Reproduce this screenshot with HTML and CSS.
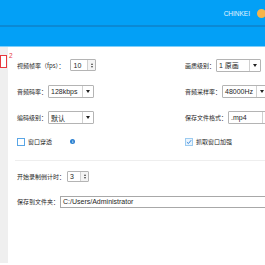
FILE: index.html
```html
<!DOCTYPE html>
<html lang="zh-CN">
<head>
    <meta charset="UTF-8">
    <meta name="viewport" content="width=device-width, initial-scale=1.0">
    <title>录制设置</title>
    <link rel="stylesheet" href="styles.css">
</head>
<body>
    <div class="topbar">
        <span class="user-name">CHINKEI</span>
        <span class="user-badge"></span>
    </div>
    <div class="subbar"></div>

    <div class="main">
        <div class="sidebar">
            <div class="tab-active"></div>
            <span class="tab-count">2</span>
        </div>

        <div class="content">
            <div class="form-grid">
                <div class="field">
                    <span class="label">视频帧率（fps）：</span>
                    <div class="spin spin-fps">
                        <span class="spin-value">10</span>
                        <span class="spin-buttons"><i class="up"></i><i class="down"></i></span>
                    </div>
                </div>
                <div class="field">
                    <span class="label">画质级别：</span>
                    <div class="select select-quality">
                        <span class="select-value">1 原画</span>
                        <span class="select-arrow"></span>
                    </div>
                </div>

                <div class="field">
                    <span class="label">音频码率：</span>
                    <div class="select">
                        <span class="select-value">128kbps</span>
                        <span class="select-arrow"></span>
                    </div>
                </div>
                <div class="field">
                    <span class="label">音频采样率：</span>
                    <div class="select">
                        <span class="select-value">48000Hz</span>
                        <span class="select-arrow"></span>
                    </div>
                </div>

                <div class="field">
                    <span class="label">编码级别：</span>
                    <div class="select">
                        <span class="select-value">默认</span>
                        <span class="select-arrow"></span>
                    </div>
                </div>
                <div class="field">
                    <span class="label">保存文件格式：</span>
                    <div class="select">
                        <span class="select-value">.mp4</span>
                        <span class="select-arrow"></span>
                    </div>
                </div>

                <div class="field">
                    <span class="checkbox"></span>
                    <span class="check-label">窗口穿透</span>
                    <span class="info-icon">i</span>
                </div>
                <div class="field">
                    <span class="checkbox checked">
                        <svg viewBox="0 0 8 8" width="6" height="6"><path d="M1.2 4.2 L3.2 6.1 L6.9 1.6" fill="none" stroke="#2b7fd6" stroke-width="1.2"/></svg>
                    </span>
                    <span class="check-label">抓取窗口加强</span>
                </div>
            </div>

            <div class="divider"></div>

            <div class="field row-countdown">
                <span class="label">开始录制倒计时：</span>
                <div class="spin spin-small">
                    <span class="spin-value">3</span>
                    <span class="spin-buttons"><i class="up"></i><i class="down"></i></span>
                </div>
            </div>

            <div class="field row-folder">
                <span class="label">保存到文件夹：</span>
                <div class="path-input">C:/Users/Administrator</div>
            </div>
        </div>
    </div>
</body>
</html>
```

FILE: styles.css
```css
/* General */
body {
    margin: 0;
    width: 265px;
    height: 265px;
    overflow: hidden;
    font-family: "Noto Sans CJK SC", "Noto Sans", sans-serif;
    font-size: 6px;
    color: #262626;
    background-color: #ffffff;
}

/* Header bars */
.topbar {
    height: 27px;
    padding-top: 2px;
    box-sizing: border-box;
    background-color: #03a0f6;
    border-bottom: 2px solid #0b89d4;
    display: flex;
    align-items: center;
    justify-content: flex-end;
    gap: 7px;
}

.user-name {
    font-family: "Liberation Sans", sans-serif;
    font-size: 6.5px;
    color: #e6f5ff;
}

.user-badge {
    width: 9px;
    height: 9px;
    margin-right: -1px;
    border-radius: 50%;
    background-color: #f5b44a;
}

.subbar {
    height: 19px;
    background-color: #03a0f6;
    border-bottom: 1px solid #7fcffa;
}

/* Main area */
.main {
    display: flex;
    height: 216px;
    position: relative;
}

.sidebar {
    width: 8px;
    background-color: #efefef;
    padding-top: 8px;
    box-sizing: border-box;
}

.tab-active {
    width: 7px;
    height: 13px;
    box-sizing: border-box;
    border: 1px solid #e8383d;
    background-color: #ffffff;
}

.tab-count {
    position: absolute;
    left: 9px;
    top: 5px;
    color: #e8383d;
    font-family: "Liberation Sans", sans-serif;
    font-size: 6.5px;
}

.content {
    flex: 1;
    padding: 5px 0 0 9px;
    overflow: hidden;
}

.form-grid {
    display: grid;
    grid-template-columns: 168px 1fr;
    grid-template-rows: 26px 26px 27px 21px;
}

.field {
    display: flex;
    align-items: center;
    gap: 1px;
    white-space: nowrap;
}

/* Selects */
.select {
    flex: none;
    width: 46px;
    height: 13px;
    box-sizing: border-box;
    border: 1px solid #b4b4b4;
    border-radius: 1px;
    display: flex;
    align-items: stretch;
    background-color: #ffffff;
}

.select-quality {
    width: 45px;
}

.select-value {
    flex: 1;
    display: flex;
    align-items: center;
    padding-left: 2px;
    font-family: "Liberation Sans", "Noto Sans CJK SC", sans-serif;
    font-size: 7px;
}

.select-arrow {
    width: 10px;
    border-left: 1px solid #d0d0d0;
    display: flex;
    align-items: center;
    justify-content: center;
}

.select-arrow::after {
    content: "";
    border-left: 2.5px solid transparent;
    border-right: 2.5px solid transparent;
    border-top: 3px solid #222222;
}

/* Spin boxes */
.spin {
    flex: none;
    width: 26px;
    height: 12px;
    box-sizing: border-box;
    border: 1px solid #b4b4b4;
    border-radius: 1px;
    display: flex;
    margin-left: 1px;
}

.spin-fps {
    margin-left: 5px;
}

.spin-small {
    width: 22px;
    height: 11px;
}

.spin-value {
    flex: 1;
    display: flex;
    align-items: center;
    padding-left: 2px;
    font-family: "Liberation Sans", sans-serif;
    font-size: 7px;
}

.spin-buttons {
    width: 7px;
    border-left: 1px solid #d0d0d0;
    background-color: #f4f4f4;
    display: flex;
    flex-direction: column;
    align-items: center;
    justify-content: center;
    gap: 1px;
}

.spin-buttons .up {
    border-left: 1.5px solid transparent;
    border-right: 1.5px solid transparent;
    border-bottom: 2px solid #444444;
}

.spin-buttons .down {
    border-left: 1.5px solid transparent;
    border-right: 1.5px solid transparent;
    border-top: 2px solid #444444;
}

/* Checkboxes */
.checkbox {
    width: 8px;
    height: 8px;
    box-sizing: border-box;
    border: 1px solid #5aa6e6;
    background-color: #ffffff;
    display: flex;
    align-items: center;
    justify-content: center;
    margin-right: 2px;
}

.checkbox.checked {
    border-color: #9ccbf0;
    background-color: #eaf4fd;
}

.check-label {
    margin-right: 17px;
}

.info-icon {
    width: 5px;
    height: 5px;
    border-radius: 50%;
    background-color: #2a7fd0;
    color: #ffffff;
    font-family: "Liberation Sans", sans-serif;
    font-size: 4px;
    font-weight: bold;
    line-height: 5px;
    text-align: center;
}

/* Lower section */
.divider {
    height: 1px;
    margin: 8px 0 0 -2px;
    background-color: #eeeeee;
}

.row-countdown {
    height: 30px;
}

.row-folder {
    height: 21px;
}

.path-input {
    flex: none;
    width: 220px;
    height: 12px;
    box-sizing: border-box;
    border: 1px solid #a8a8a8;
    padding-left: 2px;
    display: flex;
    align-items: center;
    font-family: "Liberation Sans", sans-serif;
    font-size: 7px;
}
```
